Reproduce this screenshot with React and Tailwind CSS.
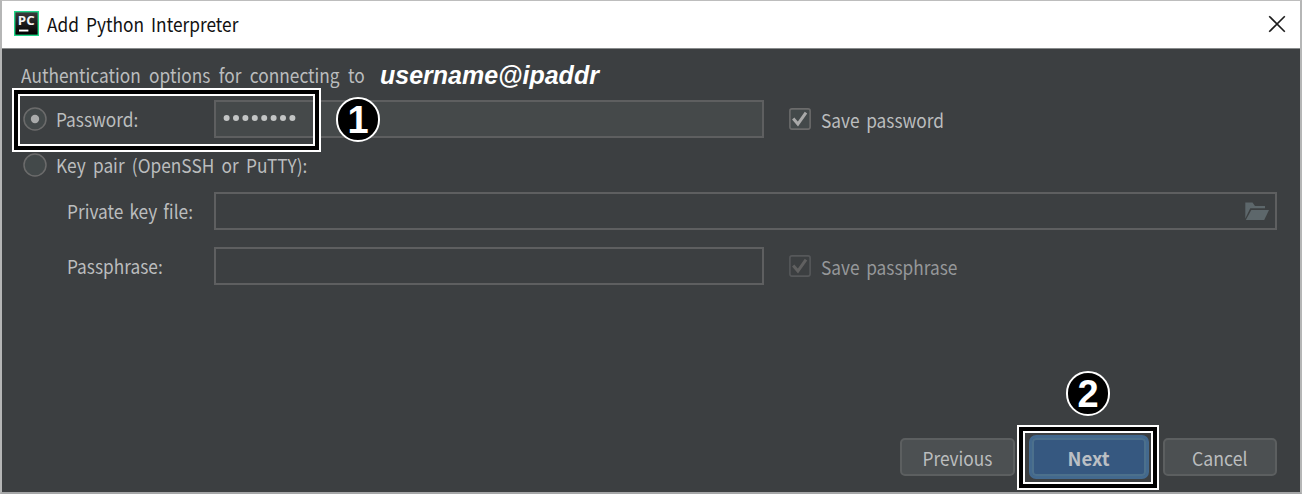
import React from 'react';

function Label({ children, className = '', fit = 'origin-left scale-x-[0.91]' }) {
  return <span className={`inline-block leading-6 whitespace-pre ${fit} ${className}`}>{children}</span>;
}

function Radio({ checked }) {
  return (
    <svg viewBox="0 0 24 24" className="h-6 w-6 shrink-0">
      <circle cx="12" cy="12" r="11" fill="#43494a" stroke="#6b6b6b" strokeWidth="1.5" />
      {checked && <circle cx="12" cy="12" r="4.2" fill="#a9abab" />}
    </svg>
  );
}

function Check({ disabled }) {
  return (
    <svg viewBox="0 0 22 22" className="h-[22px] w-[22px] shrink-0">
      <rect
        x="0.9" y="0.9" width="20.2" height="20.2" rx="2"
        fill={disabled ? '#3c3f41' : '#43494a'}
        stroke={disabled ? '#56585a' : '#6b6b6b'}
        strokeWidth="1.6"
      />
      <path d="M4.2 10.6 L8.9 16 L17 4.6" fill="none" stroke={disabled ? '#606060' : '#a9a9a9'} strokeWidth="3" />
    </svg>
  );
}

function Field({ className = '', children }) {
  return <div className={`flex h-[38px] items-center border-2 border-[#5e5f60] ${className}`}>{children}</div>;
}

function Badge({ className, children }) {
  return (
    <div className={`absolute flex h-[45px] w-11 items-center justify-center rounded-full border-2 border-white bg-black font-['Liberation_Sans',sans-serif] text-[38px] leading-none font-bold text-white ${className}`}>
      {children}
    </div>
  );
}

function Highlight({ className }) {
  return (
    <div className={`absolute border-2 border-white ${className}`}>
      <div className="h-full w-full border-4 border-black">
        <div className="h-full w-full border-2 border-white" />
      </div>
    </div>
  );
}

export default function App() {
  return (
    <div className="relative flex h-[494px] w-[1302px] flex-col overflow-hidden border-t border-r-2 border-b-2 border-l-2 border-t-[#bdbdbd] border-r-[#b5b6b6] border-b-[#a5a6a7] border-l-[#b5b6b6] bg-[#3c3f41] font-['Noto_Sans_CJK_KR',sans-serif] text-[19px] text-[#bbbdbe]">
      <header className="flex h-12 shrink-0 items-center border-b border-[#888b8c] bg-white pr-[14px] pb-[2px] pl-3">
        <svg viewBox="0 0 25 25" className="h-[25px] w-[25px] shrink-0">
          <defs>
            <linearGradient id="tile" x1="0" y1="0" x2="0" y2="1">
              <stop offset="0" stopColor="#3a3a3a" />
              <stop offset="1" stopColor="#000" />
            </linearGradient>
          </defs>
          <rect width="25" height="25" fill="#21d789" />
          <rect x="1.4" y="1.4" width="22.2" height="22.2" fill="url(#tile)" />
          <text x="3.8" y="14" fill="#f4f4f4" fontFamily="Open Sans, sans-serif" fontWeight="700" fontSize="13" textLength="16.8" lengthAdjust="spacingAndGlyphs">PC</text>
          <rect x="5" y="18.6" width="9.4" height="1.9" fill="#fff" />
        </svg>
        <Label className="ml-2 text-[#111111] [word-spacing:3.5px]">Add Python Interpreter</Label>
        <svg viewBox="0 0 18 18" className="ml-auto h-[18px] w-[18px]">
          <path d="M1.2 1.2 L16.8 16.8 M16.8 1.2 L1.2 16.8" stroke="#1c1c1c" strokeWidth="1.6" fill="none" />
        </svg>
      </header>

      <main className="flex flex-1 flex-col pr-[23px] pb-4 pl-[19px]">
        <div className="mt-[14px] flex h-6 items-center">
          <Label className="w-[359px] [word-spacing:5px]">Authentication options for connecting to</Label>
          <span className="font-['Liberation_Sans',sans-serif] text-[25px] leading-6 font-bold text-white italic">username@ipaddr</span>
        </div>

        <div className="mt-[13px] flex h-[38px] items-center">
          <div className="flex w-[193px] items-center pl-[2px]">
            <Radio checked />
            <Label className="ml-[9px]">Password:</Label>
          </div>
          <Field className="w-[550px] bg-[#45494a] pl-[7px]">
            <svg viewBox="0 0 76 8" className="h-2 w-[76px]" fill="#c3c5c5">
              {[0, 1, 2, 3, 4, 5, 6, 7].map((i) => (
                <circle key={i} cx={3.6 + i * 9.4} cy="3" r="3" />
              ))}
            </svg>
          </Field>
          <div className="ml-[25px] flex items-center gap-[10px]">
            <Check />
            <Label className="pt-[2px] [word-spacing:3px]">Save password</Label>
          </div>
        </div>

        <div className="mt-[15px] flex h-6 items-center pl-[2px]">
          <Radio />
          <Label className="ml-[9px] [word-spacing:3.7px]">Key pair (OpenSSH or PuTTY):</Label>
        </div>

        <div className="mt-[15px] flex h-[38px] items-center">
          <div className="w-[193px] pl-[46px]">
            <Label className="[word-spacing:2.4px]">Private key file:</Label>
          </div>
          <Field className="flex-1 justify-end pr-[6px]">
            <svg viewBox="0 0 24 18" className="h-[18px] w-6" fill="#5d676b">
              <path d="M0.3 16.5 V0.5 H7.5 L10 4 H20 V6.3 H5.3 Z" />
              <path d="M6.3 8 H24 L19.2 18 H0.8 Z" />
            </svg>
          </Field>
        </div>

        <div className="mt-[17px] flex h-[38px] items-center">
          <div className="w-[193px] pl-[46px]">
            <Label>Passphrase:</Label>
          </div>
          <Field className="w-[550px]" />
          <div className="ml-[25px] flex items-center gap-[10px]">
            <Check disabled />
            <Label className="pt-[2px] text-[#96989a] [word-spacing:3px]">Save passphrase</Label>
          </div>
        </div>

        <div className="mt-auto flex h-[38px] items-center justify-end gap-[14px]">
          <button className="flex h-[38px] w-[115px] items-center justify-center rounded-[5px] border-2 border-[#5c5f60] bg-[#4c5052]">
            <Label fit="origin-center scale-x-[0.91]" className="pt-px">Previous</Label>
          </button>
          <button className="-my-1 flex h-11 w-[120px] items-center justify-center rounded-[7px] border-[3px] border-[#43698e] bg-[#365880]">
            <span className="flex h-full w-full items-center justify-center rounded-[4px] border-2 border-[#4c708c] pr-px">
              <Label fit="origin-center scale-x-[0.98]" className="pt-px font-bold text-[#bbbfc4]">Next</Label>
            </span>
          </button>
          <button className="flex h-[38px] w-[114px] items-center justify-center rounded-[5px] border-2 border-[#5c5f60] bg-[#4c5052] pr-px">
            <Label fit="origin-center scale-x-[0.93]" className="pt-px">Cancel</Label>
          </button>
        </div>
      </main>

      <Highlight className="top-[87px] left-[10px] h-16 w-[309px]" />
      <Badge className="top-[96px] left-[334px]">1</Badge>
      <Highlight className="top-[424px] left-[1015px] h-[65px] w-[142px]" />
      <Badge className="top-[370px] left-[1064px]">2</Badge>
    </div>
  );
}
